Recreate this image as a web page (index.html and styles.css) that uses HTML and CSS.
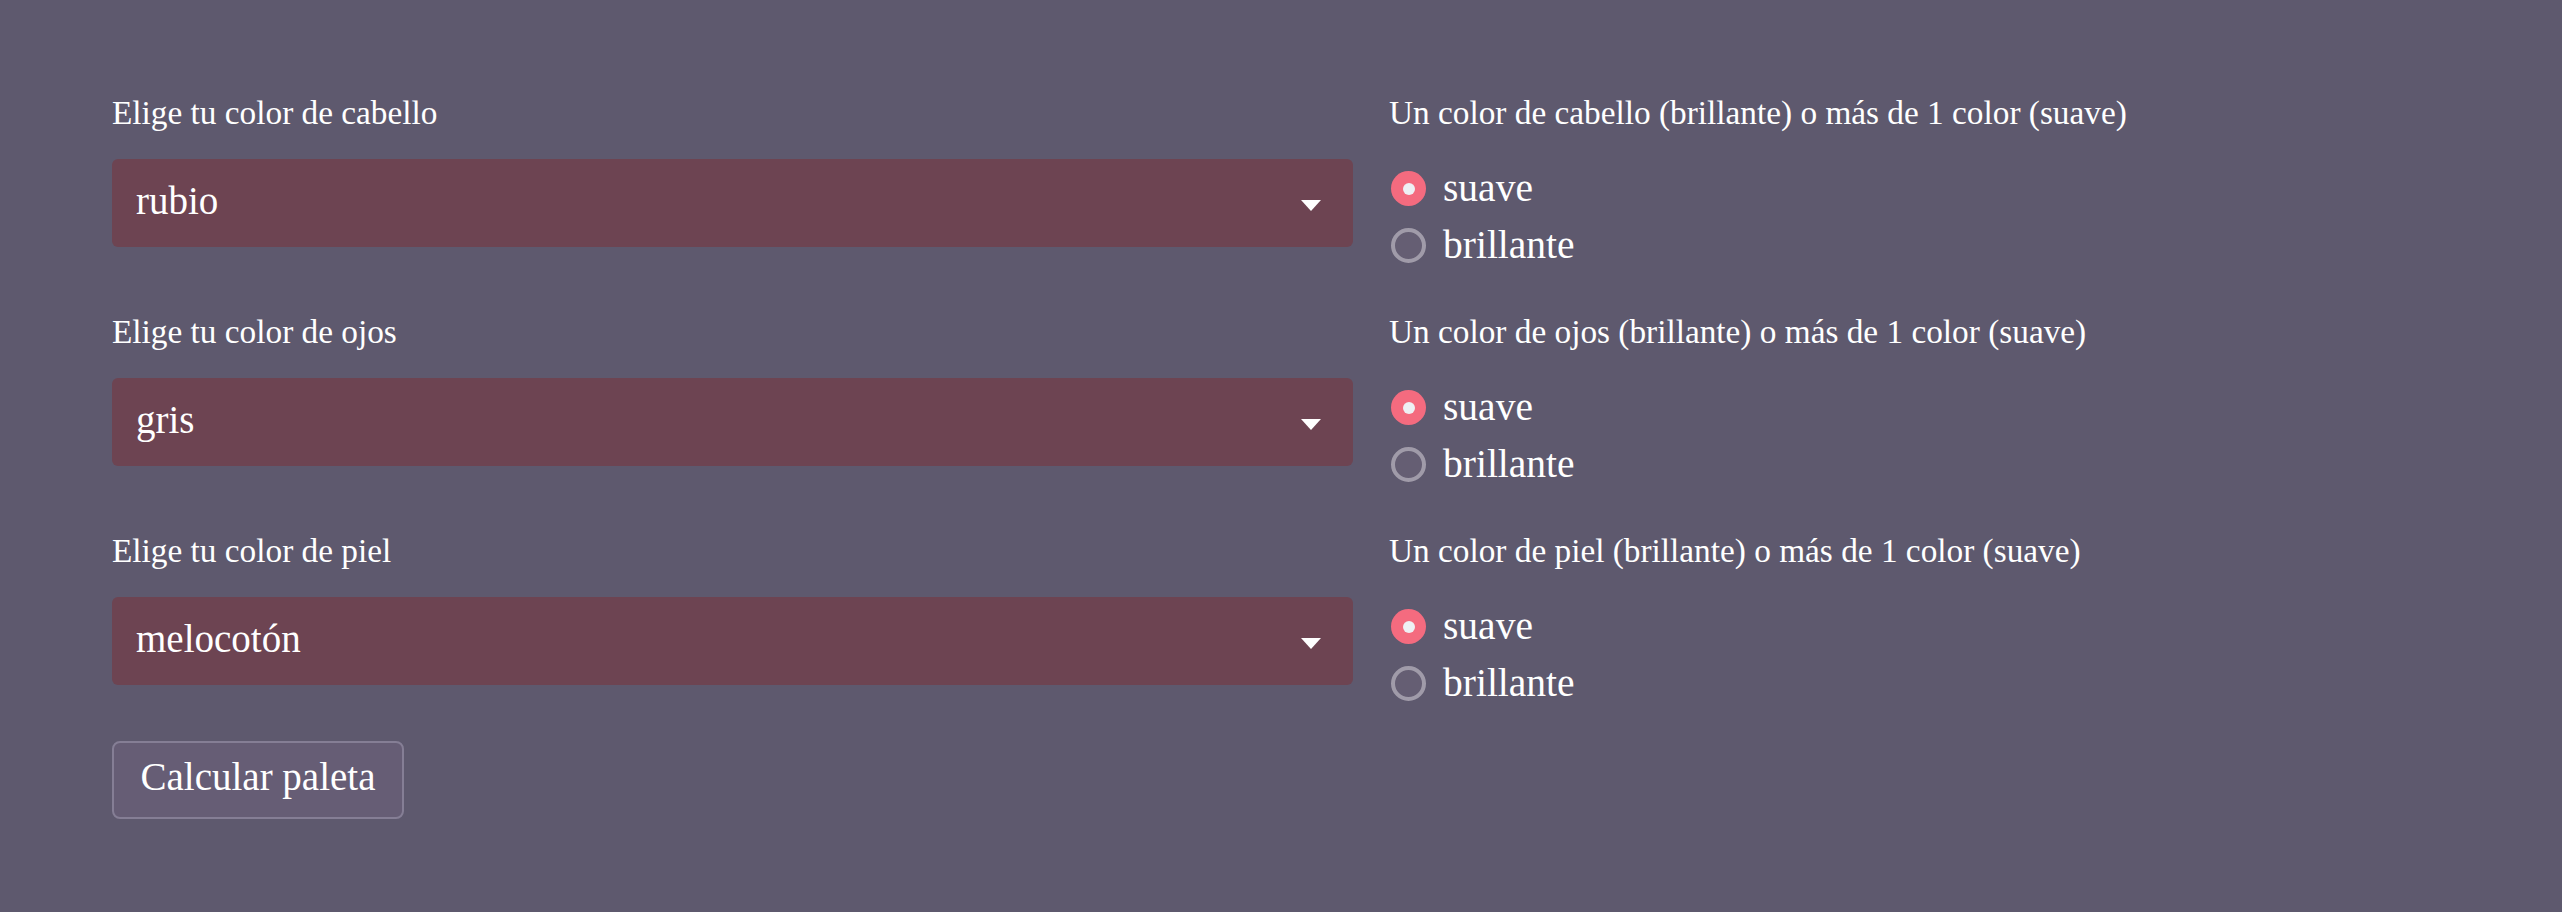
FILE: index.html
```html
<!DOCTYPE html>
<html lang="es">
<head>
<meta charset="utf-8">
<title>Paleta</title>
<link rel="stylesheet" href="styles.css">
</head>
<body>
<form class="form">
  <div class="row">
    <div class="field">
      <label class="label">Elige tu color de cabello</label>
      <div class="select"><span class="select-text">rubio</span><svg class="arrow" width="20" height="11" viewBox="0 0 20 11"><path d="M0 0H20L10 11Z" fill="#fff"/></svg></div>
    </div>
    <div class="choice">
      <div class="label">Un color de cabello (brillante) o más de 1 color (suave)</div>
      <div class="radios">
        <label class="radio"><span class="dot checked"></span><span class="radio-text">suave</span></label>
        <label class="radio"><span class="dot"></span><span class="radio-text">brillante</span></label>
      </div>
    </div>
  </div>
  <div class="row">
    <div class="field">
      <label class="label">Elige tu color de ojos</label>
      <div class="select"><span class="select-text">gris</span><svg class="arrow" width="20" height="11" viewBox="0 0 20 11"><path d="M0 0H20L10 11Z" fill="#fff"/></svg></div>
    </div>
    <div class="choice">
      <div class="label">Un color de ojos (brillante) o más de 1 color (suave)</div>
      <div class="radios">
        <label class="radio"><span class="dot checked"></span><span class="radio-text">suave</span></label>
        <label class="radio"><span class="dot"></span><span class="radio-text">brillante</span></label>
      </div>
    </div>
  </div>
  <div class="row">
    <div class="field">
      <label class="label">Elige tu color de piel</label>
      <div class="select"><span class="select-text">melocotón</span><svg class="arrow" width="20" height="11" viewBox="0 0 20 11"><path d="M0 0H20L10 11Z" fill="#fff"/></svg></div>
    </div>
    <div class="choice">
      <div class="label">Un color de piel (brillante) o más de 1 color (suave)</div>
      <div class="radios">
        <label class="radio"><span class="dot checked"></span><span class="radio-text">suave</span></label>
        <label class="radio"><span class="dot"></span><span class="radio-text">brillante</span></label>
      </div>
    </div>
  </div>
  <div class="actions">
    <button type="button" class="button">Calcular paleta</button>
  </div>
</form>
</body>
</html>
```
FILE: styles.css
```css
html, body {
  margin: 0;
  padding: 0;
}
body {
  background: #5e596e;
  color: #ffffff;
  font-family: "Liberation Serif", "Times New Roman", serif;
  height: 912px;
  overflow: hidden;
}
.form {
  display: flex;
  flex-direction: column;
  padding: 94px 112px 0 112px;
}
.row {
  display: grid;
  grid-template-columns: 1241px 1fr;
  column-gap: 36px;
  height: 219px;
}
.field {
  display: flex;
  flex-direction: column;
}
.label {
  display: block;
  font-size: 33.3px;
  line-height: 38px;
  white-space: nowrap;
}
.select {
  margin-top: 27px;
  height: 88px;
  box-sizing: border-box;
  background: #6d4452;
  border-radius: 6px;
  display: flex;
  align-items: center;
  justify-content: space-between;
  padding: 0 32px 0 24px;
}
.select-text {
  font-size: 39px;
  padding-bottom: 6px;
}
.arrow {
  display: block;
  margin-top: 4px;
}
.choice {
  display: flex;
  flex-direction: column;
}
.radios {
  display: flex;
  flex-direction: column;
  margin-top: 28px;
}
.radio {
  display: flex;
  align-items: center;
  height: 57px;
  gap: 17px;
  padding-left: 2px;
}
.dot {
  width: 35px;
  height: 35px;
  box-sizing: border-box;
  border-radius: 50%;
  border: 4px solid #a09ba9;
  background: #655e73;
  display: flex;
  align-items: center;
  justify-content: center;
  flex: none;
}
.dot.checked {
  border: none;
  background: #f46b7f;
}
.dot.checked::after {
  content: "";
  width: 12px;
  height: 12px;
  border-radius: 50%;
  background: #eef0f4;
}
.radio-text {
  font-size: 39.5px;
  padding-bottom: 2px;
}
.actions {
  display: flex;
  margin-top: -10px;
}
.button {
  font-family: "Liberation Serif", "Times New Roman", serif;
  font-size: 39px;
  color: #ffffff;
  background: #665d75;
  border: 2px solid #857e95;
  border-radius: 8px;
  width: 292px;
  height: 78px;
  box-sizing: border-box;
  padding: 0 0 7px 0;
  display: flex;
  align-items: center;
  justify-content: center;
}
```
